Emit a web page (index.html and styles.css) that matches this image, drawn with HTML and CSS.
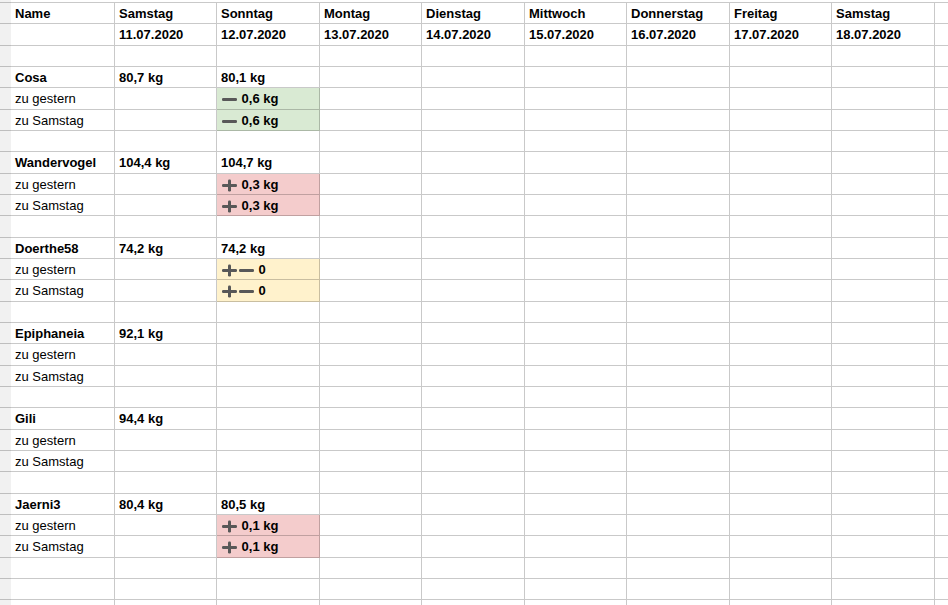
FILE: index.html
```html
<!DOCTYPE html>
<html lang="de">
<head>
<meta charset="utf-8">
<title>Gewicht</title>
<link rel="stylesheet" href="styles.css">
</head>
<body>
<svg class="defs" width="0" height="0" aria-hidden="true">
  <defs>
    <symbol id="minus" viewBox="0 0 17 13"><rect x="1" y="5" width="15" height="3" rx="1.2"/></symbol>
    <symbol id="plus" viewBox="0 0 17 13"><rect x="1" y="5" width="15" height="3" rx="1.2"/><rect x="7" y="0.5" width="3" height="12" rx="1.2"/></symbol>
  </defs>
</svg>
<div class="sheet">
  <div class="row"><div></div><div>Name</div><div>Samstag</div><div>Sonntag</div><div>Montag</div><div>Dienstag</div><div>Mittwoch</div><div>Donnerstag</div><div>Freitag</div><div>Samstag</div><div></div></div>
  <div class="row"><div></div><div></div><div>11.07.2020</div><div>12.07.2020</div><div>13.07.2020</div><div>14.07.2020</div><div>15.07.2020</div><div>16.07.2020</div><div>17.07.2020</div><div>18.07.2020</div><div></div></div>
  <div class="row"><div></div><div></div><div></div><div></div><div></div><div></div><div></div><div></div><div></div><div></div><div></div></div>

  <div class="row"><div></div><div>Cosa</div><div>80,7 kg</div><div>80,1 kg</div><div></div><div></div><div></div><div></div><div></div><div></div><div></div></div>
  <div class="row"><div></div><div class="lbl">zu gestern</div><div></div><div class="down"><svg class="ic"><use href="#minus"/></svg> 0,6 kg</div><div></div><div></div><div></div><div></div><div></div><div></div><div></div></div>
  <div class="row"><div></div><div class="lbl">zu Samstag</div><div></div><div class="down"><svg class="ic"><use href="#minus"/></svg> 0,6 kg</div><div></div><div></div><div></div><div></div><div></div><div></div><div></div></div>
  <div class="row"><div></div><div></div><div></div><div></div><div></div><div></div><div></div><div></div><div></div><div></div><div></div></div>

  <div class="row"><div></div><div>Wandervogel</div><div>104,4 kg</div><div>104,7 kg</div><div></div><div></div><div></div><div></div><div></div><div></div><div></div></div>
  <div class="row"><div></div><div class="lbl">zu gestern</div><div></div><div class="up"><svg class="ic"><use href="#plus"/></svg> 0,3 kg</div><div></div><div></div><div></div><div></div><div></div><div></div><div></div></div>
  <div class="row"><div></div><div class="lbl">zu Samstag</div><div></div><div class="up"><svg class="ic"><use href="#plus"/></svg> 0,3 kg</div><div></div><div></div><div></div><div></div><div></div><div></div><div></div></div>
  <div class="row"><div></div><div></div><div></div><div></div><div></div><div></div><div></div><div></div><div></div><div></div><div></div></div>

  <div class="row"><div></div><div>Doerthe58</div><div>74,2 kg</div><div>74,2 kg</div><div></div><div></div><div></div><div></div><div></div><div></div><div></div></div>
  <div class="row"><div></div><div class="lbl">zu gestern</div><div></div><div class="same"><svg class="ic"><use href="#plus"/></svg><svg class="ic"><use href="#minus"/></svg> 0</div><div></div><div></div><div></div><div></div><div></div><div></div><div></div></div>
  <div class="row"><div></div><div class="lbl">zu Samstag</div><div></div><div class="same"><svg class="ic"><use href="#plus"/></svg><svg class="ic"><use href="#minus"/></svg> 0</div><div></div><div></div><div></div><div></div><div></div><div></div><div></div></div>
  <div class="row"><div></div><div></div><div></div><div></div><div></div><div></div><div></div><div></div><div></div><div></div><div></div></div>

  <div class="row"><div></div><div>Epiphaneia</div><div>92,1 kg</div><div></div><div></div><div></div><div></div><div></div><div></div><div></div><div></div></div>
  <div class="row"><div></div><div class="lbl">zu gestern</div><div></div><div></div><div></div><div></div><div></div><div></div><div></div><div></div><div></div></div>
  <div class="row"><div></div><div class="lbl">zu Samstag</div><div></div><div></div><div></div><div></div><div></div><div></div><div></div><div></div><div></div></div>
  <div class="row"><div></div><div></div><div></div><div></div><div></div><div></div><div></div><div></div><div></div><div></div><div></div></div>

  <div class="row"><div></div><div>Gili</div><div>94,4 kg</div><div></div><div></div><div></div><div></div><div></div><div></div><div></div><div></div></div>
  <div class="row"><div></div><div class="lbl">zu gestern</div><div></div><div></div><div></div><div></div><div></div><div></div><div></div><div></div><div></div></div>
  <div class="row"><div></div><div class="lbl">zu Samstag</div><div></div><div></div><div></div><div></div><div></div><div></div><div></div><div></div><div></div></div>
  <div class="row"><div></div><div></div><div></div><div></div><div></div><div></div><div></div><div></div><div></div><div></div><div></div></div>

  <div class="row"><div></div><div>Jaerni3</div><div>80,4 kg</div><div>80,5 kg</div><div></div><div></div><div></div><div></div><div></div><div></div><div></div></div>
  <div class="row"><div></div><div class="lbl">zu gestern</div><div></div><div class="up"><svg class="ic"><use href="#plus"/></svg> 0,1 kg</div><div></div><div></div><div></div><div></div><div></div><div></div><div></div></div>
  <div class="row"><div></div><div class="lbl">zu Samstag</div><div></div><div class="up"><svg class="ic"><use href="#plus"/></svg> 0,1 kg</div><div></div><div></div><div></div><div></div><div></div><div></div><div></div></div>
  <div class="row"><div></div><div></div><div></div><div></div><div></div><div></div><div></div><div></div><div></div><div></div><div></div></div>
  <div class="row"><div></div><div></div><div></div><div></div><div></div><div></div><div></div><div></div><div></div><div></div><div></div></div>
  <div class="row"><div></div><div></div><div></div><div></div><div></div><div></div><div></div><div></div><div></div><div></div><div></div></div>
</div>
</body>
</html>
```
FILE: styles.css
```css
html, body {
  margin: 0;
  height: 605px;
  overflow: hidden;
}
body {
  background: linear-gradient(90deg, #f1f1f1 11px, #fff 11px);
  font-family: "Liberation Sans", Arial, sans-serif;
  font-size: 13px;
  color: #000;
}
.defs {
  position: absolute;
  width: 0;
  height: 0;
}
.sheet {
  margin-top: 2px;
  border-top: 1px solid rgba(0, 0, 0, 0.21);
}
.row {
  display: grid;
  grid-template-columns: 11px 104px 102px 103px 102px 103px 102px 103px 102px 103px 1fr;
  height: 21.333px;
  font-weight: bold;
}
.row > div {
  box-sizing: border-box;
  height: 21.333px;
  border-bottom: 1px solid rgba(0, 0, 0, 0.21);
  border-right: 1px solid rgba(0, 0, 0, 0.21);
  padding-left: 4px;
  line-height: 21px;
  white-space: nowrap;
  overflow: hidden;
}
.row > div:first-child {
  background: #f1f1f1;
  border-right: none;
  padding: 0;
}
.row > div:last-child {
  border-right: none;
}
.row > .lbl {
  font-weight: normal;
}
.row > .down { background: #d9ead3; }
.row > .up { background: #f4cccc; }
.row > .same { background: #fff2cc; }
.ic {
  width: 17px;
  height: 13px;
  vertical-align: -3px;
  fill: #585858;
}
```
